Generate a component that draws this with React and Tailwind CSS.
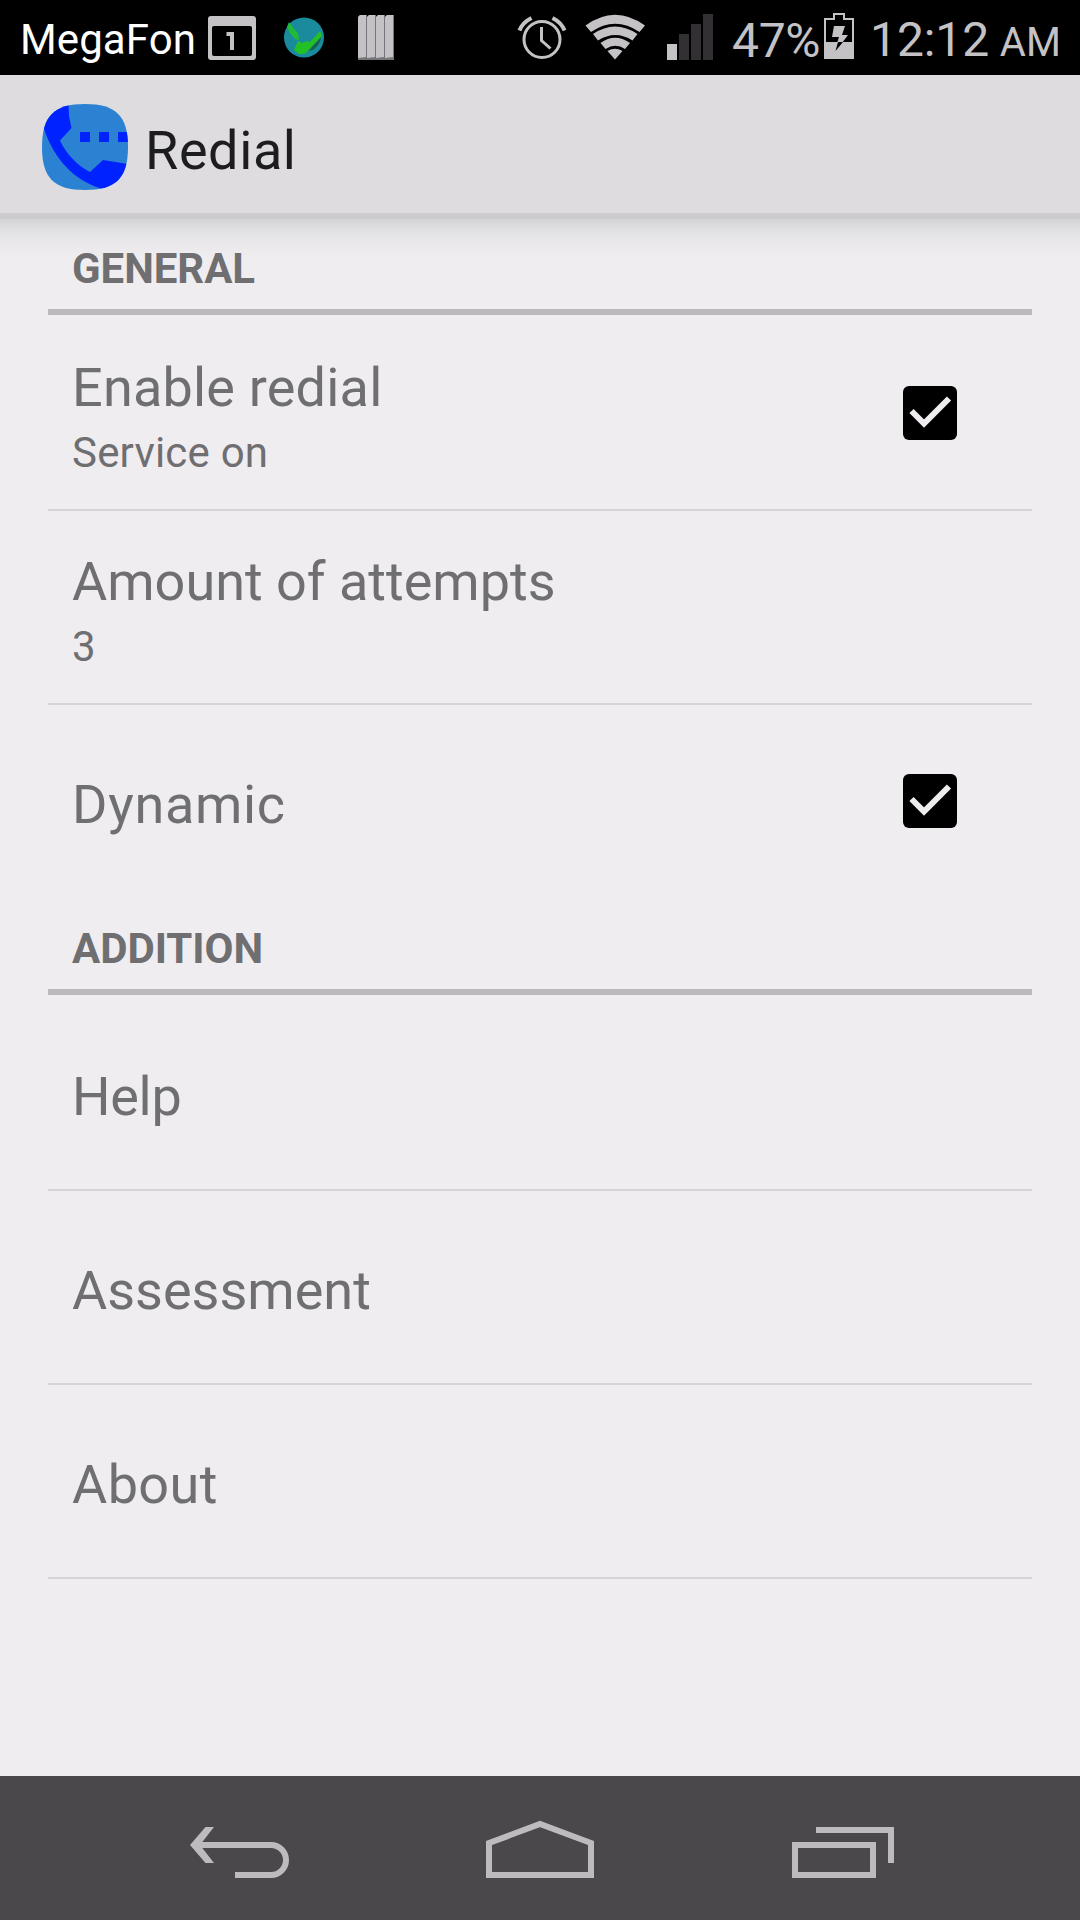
import React from 'react';

const StatusBar = () => (
  <div className="h-[75px] shrink-0 bg-black flex items-center justify-between text-[#c4c2c5]">
    <div className="flex items-center h-full">
      <span className="w-[176px] pl-[20px] pt-[5px] text-[42px] leading-[70px] tracking-[0.1px] text-white whitespace-nowrap">MegaFon</span>
      <svg className="w-[224px] h-[75px] ml-[24px]" viewBox="200 0 224 75">
        {/* calendar */}
        <path fill="#c4c2c5" fillRule="evenodd" d="M211 16h42q3 0 3 3v38q0 3-3 3h-42q-3 0-3-3v-38q0-3 3-3zM214 26q-2 0-2 2v26q0 2 2 2h36q2 0 2-2v-26q0-2-2-2z" />
        <path fill="#c4c2c5" d="M226.500 32h7.500v18h-4v-14h-3.500z" />
        {/* globe */}
        <circle cx="304" cy="37.500" r="20" fill="#1a8b9c" />
        <path fill="#17624e" d="M308 51l13-14q0 7-8 13z" />
        <path fill="#1fbb33" d="M287 27l2-5 5 7 4 4 1 7-4-1-5-6z" />
        <path fill="#22bf25" d="M298 41l4 2 5-2 3 1 10-11 2 5-7 7-7 8-4 3h-5l-5-4z" />
        {/* bars */}
        {[358, 367, 376, 385].map((x) => (
          <g key={x}>
            <path fill="#77757a" d={`M${x} 60v-43l2-2h7v45z`} />
            <path fill="#c4c2c5" d={`M${x} 58v-41l2-2h6v42z`} />
          </g>
        ))}
      </svg>
    </div>
    <div className="flex items-center h-full">
      <svg className="w-[200px] h-[75px]" viewBox="514 0 200 75" fill="none" stroke="#c4c2c5">
        {/* alarm */}
        <circle cx="542" cy="39.500" r="18" strokeWidth="3" />
        <path strokeWidth="3" d="M541.500 27v13.500l9 8" />
        <path strokeWidth="4" d="M519.500 30.500q3-8 12-12.500M564.500 30.500q-3-8-12-12.500" />
        {/* wifi */}
        <g fill="#c4c2c5" stroke="none">
          <path d="M585.500 25.500q29.500-21.500 59.500 0l-5.500 6.500q-24.500-16.500-48.500 0z" />
          <path d="M593 34q22-15 44.500 0l-5 6.500q-17-11-34.500 0z" />
          <path d="M600.500 43q14.500-10.500 29.500 0l-5 6q-9.500-6.500-19.500 0z" />
          <path d="M607.500 51q7.500-4.500 15 0l-7.500 8.500z" />
        </g>
        {/* signal */}
        <g stroke="none">
          <rect x="667" y="44" width="10" height="16" fill="#c4c2c5" />
          <rect x="679" y="34" width="10" height="26" fill="#323033" />
          <rect x="691" y="24" width="10" height="36" fill="#323033" />
          <rect x="703" y="14" width="10" height="46" fill="#323033" />
        </g>
      </svg>
      <span className="w-[110px] pl-[18px] pt-[6px] text-[48px] leading-[69px] tracking-[-0.3px] whitespace-nowrap">47%</span>
      <svg className="w-[30px] h-[75px]" viewBox="824 0 30 75">
        <path fill="none" stroke="#c4c2c5" strokeWidth="2" d="M825 58V19h9v-5h10v5h9v39" />
        <rect x="824" y="42" width="30" height="17" fill="#c4c2c5" />
        <path fill="#c4c2c5" d="M834 26h11l-3 9h6l-6 8h-5l2-6h-7z" />
        <path fill="#000" d="M838 42h5l-7.500 9z" />
      </svg>
      <span className="w-[226px] pl-[16px] pt-[6px] text-[48px] leading-[69px] whitespace-nowrap">
        <span className="tracking-[-0.1px]">12:12 </span>
        <span className="text-[40px] -ml-[1px]">AM</span>
      </span>
    </div>
  </div>
);

const AppIcon = () => (
  <svg className="w-[86px] h-[86px]" viewBox="0 0 86 86">
    <defs>
      <clipPath id="squircle">
        <path d="M43 0C74 0 86 12 86 43S74 86 43 86 0 74 0 43 12 0 43 0z" />
      </clipPath>
    </defs>
    <g clipPath="url(#squircle)">
      <rect width="86" height="86" fill="#2b82d3" />
      <path fill="#0022ff" d="M0 0h26.500l.5 12 2.500 12-11.500 12.500C24 50 36 62 48 68l13-12 25 4v26H66C44 82 16 66 2 25z" />
      <path fill="#0022ff" d="M38 28h10v10h-10zM57 28h10v10h-10zM76 28h10v10h-10z" />
    </g>
  </svg>
);

const ActionBar = () => (
  <div className="h-[138px] shrink-0 bg-[#dedcde] flex items-start pl-[42px] pt-[29px]">
    <AppIcon />
    <h1 className="ml-[17px] text-[54px] leading-[86px] tracking-[0.6px] pt-[4px] text-[#1d1c1e]">Redial</h1>
  </div>
);

const SectionHeader = ({ children }) => (
  <h2 className="h-[96px] mb-[2px] pl-6 pt-[10px] border-b-[6px] border-[#bab9bb] text-[42px] leading-[80px] tracking-[-0.05px] font-bold text-[#6f6e71]">
    {children}
  </h2>
);

const Checkbox = () => (
  <svg className="w-[54px] h-[54px] mr-[75px] shrink-0" viewBox="0 0 54 54">
    <rect width="54" height="54" rx="6" fill="#000" />
    <path d="M8.500 25l12.500 12.500 25-25" fill="none" stroke="#efedf0" strokeWidth="6" />
  </svg>
);

const Preference = ({ title, summary, checked, last, tracking = 'tracking-normal' }) => (
  <div className={`h-[194px] pl-6 flex items-center justify-between border-b-2 ${last ? 'border-transparent' : 'border-[#d5d3d6]'}`}>
    <div className="pt-[7px] text-[#6f6e71]">
      <div className={`text-[54px] leading-[72px] ${tracking}`}>{title}</div>
      {summary && <div className="text-[42px] leading-[58px] tracking-[0.2px]">{summary}</div>}
    </div>
    {checked && <Checkbox />}
  </div>
);

const NavBar = () => (
  <div className="h-[144px] shrink-0 bg-[#4a484a]">
    <svg className="w-full h-full" viewBox="0 1776 1080 144" fill="none" stroke="#bdbbbe" strokeWidth="6">
      <path d="M194 1845h77a15 15 0 0 1 0 30h-36" />
      <path fill="#bdbbbe" stroke="none" d="M190 1845l15.500-18h8.500l-14 18 14 18h-8.500z" />
      <path d="M489 1843l51-19 51 19v32h-102z" />
      <path d="M795 1845h78v30h-78zM816 1830h75v33" />
    </svg>
  </div>
);

export default function App() {
  return (
    <div className="w-[1080px] h-[1920px] flex flex-col overflow-hidden bg-[#efedf0] font-[Roboto,sans-serif]">
      <StatusBar />
      <ActionBar />
      <div className="h-[6px] shrink-0 bg-[#cccbcd]" />
      <main className="flex-1 px-12 bg-[linear-gradient(to_bottom,#d3d2d4_0px,#e0dfe1_10px,#eae8eb_24px,#efedf0_40px)]">
        <SectionHeader>GENERAL</SectionHeader>
        <Preference title="Enable redial" summary="Service on" checked tracking="tracking-[0.2px]" />
        <Preference title="Amount of attempts" summary="3" />
        <Preference title="Dynamic" checked last tracking="tracking-[0.7px]" />
        <SectionHeader>ADDITION</SectionHeader>
        <Preference title="Help" tracking="tracking-[-0.3px]" />
        <Preference title="Assessment" />
        <Preference title="About" tracking="tracking-[0.4px]" />
      </main>
      <NavBar />
    </div>
  );
}
